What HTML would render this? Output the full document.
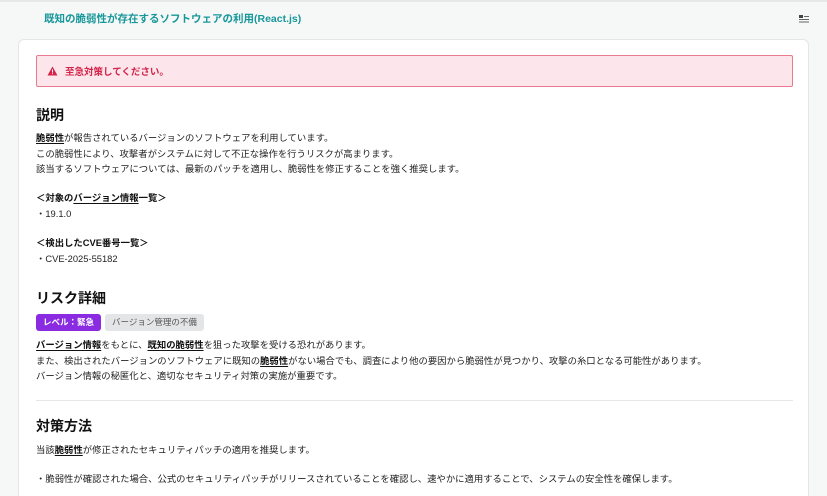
<!DOCTYPE html>
<html style="height:496px;overflow:hidden"><head><meta charset="utf-8"><style>
*{margin:0;padding:0;box-sizing:border-box}
body{width:827px;height:496px;overflow:hidden;background:#f6f7f7;font-family:"Liberation Sans","Noto Sans CJK JP",sans-serif;color:#222;position:relative}
.top{position:absolute;left:0;top:0;width:827px;height:2px;background:#e6e8e8}
.title{position:absolute;left:44px;top:11px;font-size:10.5px;font-weight:bold;color:#17979a}
.icon{position:absolute;left:799px;top:14px;width:10px;height:9px}
.card{position:absolute;left:18px;top:39px;width:791px;height:480px;background:#fff;border:1px solid #e4e6e6;border-radius:6px}
.alert{position:absolute;left:17px;top:15px;width:757px;height:32px;background:#fce6eb;border:1px solid #e87a90;border-radius:2px;color:#d3244a;font-size:9.5px;font-weight:bold;padding:8px 0 0 28px}
.alert svg{position:absolute;left:10px;top:10px}
.c{position:absolute;left:17px;font-size:9.35px;line-height:15.5px;white-space:nowrap}
h2{position:absolute;left:17px;font-size:14px;font-weight:bold;color:#111}
b{font-weight:bold;color:#111}
u{text-decoration:underline;text-underline-offset:2px}
.b1{display:inline-block;background:#8a2be2;color:#fff;font-size:8.5px;font-weight:bold;padding:2px 7px;border-radius:3px;height:17px;line-height:13px}
.b2{display:inline-block;background:#e3e5e6;color:#555;font-size:8.5px;padding:2px 7px;border-radius:3px;height:17px;line-height:13px;margin-left:4px}
hr{position:absolute;left:17px;top:360px;width:757px;border:0;border-top:1px solid #e6e6e6}
</style></head><body>
<div class="top"></div>
<div class="title">既知の脆弱性が存在するソフトウェアの利用(React.js)</div>
<svg class="icon" viewBox="0 0 10 9"><rect x="0" y="1" width="4" height="3" fill="#444"/><rect x="5" y="2" width="5" height="1" fill="#666"/><rect x="0" y="5" width="10" height="1" fill="#666"/><rect x="0" y="7.5" width="10" height="1" fill="#666"/></svg>
<div class="card">
<div class="alert"><svg width="11" height="10" viewBox="0 0 11 10"><path d="M5.5 0.5L10.5 9.5H0.5Z" fill="#d3244a"/><rect x="5" y="3.5" width="1" height="3" fill="#fff"/><rect x="5" y="7.2" width="1" height="1" fill="#fff"/></svg>至急対策してください。</div>
<h2 style="top:65px">説明</h2>
<div class="c" style="top:91px"><b><u>脆弱性</u></b>が報告されているバージョンのソフトウェアを利用しています。<br>この脆弱性により、攻撃者がシステムに対して不正な操作を行うリスクが高まります。<br>該当するソフトウェアについては、最新のパッチを適用し、脆弱性を修正することを強く推奨します。</div>
<div class="c" style="top:151px"><b>＜対象の<u>バージョン情報</u>一覧＞</b><br>・19.1.0</div>
<div class="c" style="top:196px"><b>＜検出したCVE番号一覧＞</b><br>・CVE-2025-55182</div>
<h2 style="top:248px">リスク詳細</h2>
<div class="c" style="top:274px"><span class="b1">レベル：緊急</span><span class="b2">バージョン管理の不備</span></div>
<div class="c" style="top:298px"><b><u>バージョン情報</u></b>をもとに、<b><u>既知の脆弱性</u></b>を狙った攻撃を受ける恐れがあります。<br>また、検出されたバージョンのソフトウェアに既知の<b><u>脆弱性</u></b>がない場合でも、調査により他の要因から脆弱性が見つかり、攻撃の糸口となる可能性があります。<br>バージョン情報の秘匿化と、適切なセキュリティ対策の実施が重要です。</div>
<hr>
<h2 style="top:376px">対策方法</h2>
<div class="c" style="top:403px">当該<b><u>脆弱性</u></b>が修正されたセキュリティパッチの適用を推奨します。</div>
<div class="c" style="top:432px">・脆弱性が確認された場合、公式のセキュリティパッチがリリースされていることを確認し、速やかに適用することで、システムの安全性を確保します。</div>
</div>
</body></html>
